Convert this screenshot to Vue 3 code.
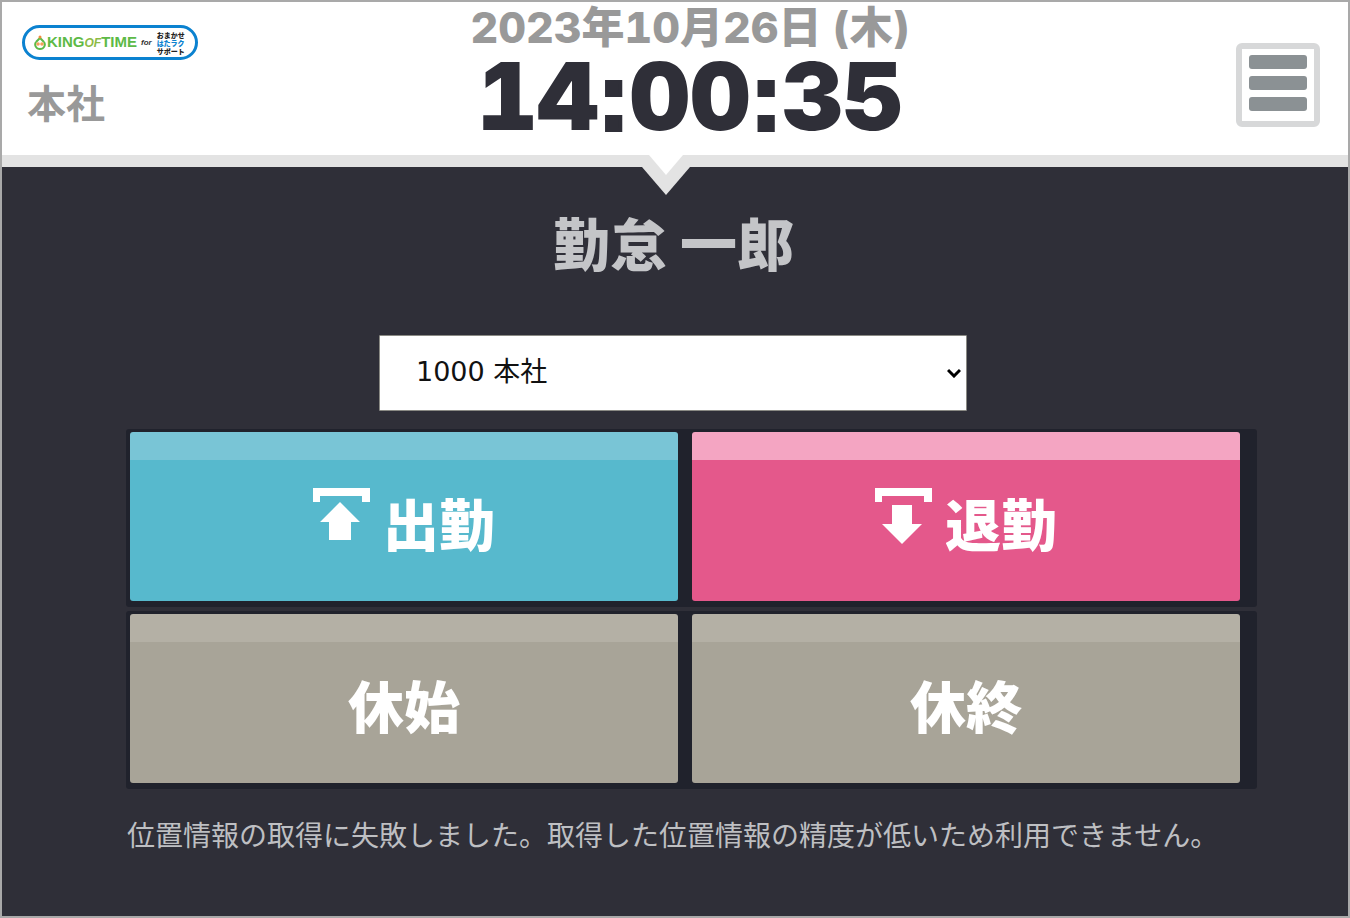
<script setup>
import { ref } from 'vue'

const base = ref('1000')
const bases = [{ code: '1000', name: '本社' }]
const time = ['14', '00', '35']
const rows = [
  [
    { label: '出勤', tone: 'in', icon: 'M20 14L40 34H31V52H9V34H0Z' },
    { label: '退勤', tone: 'out', icon: 'M10 17H30V36H40L20 56L0 36H10Z' },
  ],
  [
    { label: '休始', tone: 'rest' },
    { label: '休終', tone: 'rest' },
  ],
]
</script>

<template>
  <div class="page">
    <header class="top">
      <div class="brand">
        <div class="logo">
          <svg class="crown" viewBox="0 0 12 16" aria-hidden="true">
            <path d="M2 7C0 10 2 14 6 14S12 10 10 7" fill="none" stroke="#5dba47" stroke-width="2" />
            <path d="M2 7L6 3L10 7" fill="none" stroke="#5dba47" stroke-width="2" />
            <circle cx="6" cy="2" r="1.5" fill="#f08a3c" />
            <circle cx="4" cy="9" r="1.8" fill="#f5a05a" />
            <circle cx="8" cy="9" r="1.8" fill="#f5a05a" />
          </svg>
          <span class="king">KING<i>OF</i>TIME</span>
          <span class="for">for</span>
          <span class="plan"><span>おまかせ</span><span class="blue">はたラク</span><span>サポート</span></span>
        </div>
        <div class="office">本社</div>
      </div>
      <div class="clock">
        <div class="date">2023年10月26日 (木)</div>
        <div class="time"><template v-for="(t, i) in time" :key="i"><span v-if="i" class="colon">:</span>{{ t }}</template></div>
      </div>
      <button class="menu" type="button" aria-label="メニュー">
        <span></span><span></span><span></span>
      </button>
      <svg class="pointer" viewBox="0 0 48 41" aria-hidden="true">
        <path d="M0 12L7 0H41L48 12L24 40Z" fill="#e3e3e3" />
        <path d="M7 0H41L24 20Z" fill="#fff" />
      </svg>
    </header>

    <main class="body">
      <h1 class="name">勤怠 一郎</h1>
      <div class="picker">
        <select v-model="base" aria-label="所属">
          <option v-for="b in bases" :key="b.code" :value="b.code">{{ b.code }} {{ b.name }}</option>
        </select>
        <svg viewBox="0 0 14 10" aria-hidden="true">
          <path d="M1 2L7 8L13 2" fill="none" stroke="#000" stroke-width="3" />
        </svg>
      </div>
      <div class="stamps">
        <div v-for="(row, i) in rows" :key="i" class="row">
          <button v-for="b in row" :key="b.label" type="button" class="stamp" :class="b.tone">
            <svg v-if="b.icon" viewBox="0 0 57 57" aria-hidden="true">
              <path d="M0 0H57V14H49V8H7V14H0Z" />
              <path :d="b.icon" transform="translate(7 0)" />
            </svg>
            <span>{{ b.label }}</span>
          </button>
        </div>
      </div>
      <p class="message">位置情報の取得に失敗しました。取得した位置情報の精度が低いため利用できません。</p>
    </main>
  </div>
</template>

<style>
body {
  background: #2f2f38;
}
</style>

<style scoped>
.page {
  box-sizing: border-box;
  min-height: 100vh;
  border: 2px solid #a9a9a9;
  background: #2f2f38;
  font-family: "Liberation Sans", "Noto Sans CJK JP", sans-serif;
}
.top {
  position: relative;
  display: grid;
  grid-template-columns: 1fr auto 1fr;
  height: 153px;
  padding: 0 28px 0 20px;
  background: #fff;
  border-bottom: 12px solid #e3e3e3;
}
.brand {
  padding-top: 23px;
}
.logo {
  box-sizing: border-box;
  display: flex;
  align-items: center;
  width: 176px;
  height: 35px;
  padding: 0 9px;
  border: 3px solid #0b82d0;
  border-radius: 18px;
  white-space: nowrap;
}
.crown {
  width: 12px;
  height: 16px;
}
.king {
  margin-left: 1px;
  color: #5dba47;
  font: 800 15px/18px "Liberation Sans", sans-serif;
}
.king i {
  color: #8dbb45;
  font-size: 12px;
}
.for {
  margin: 0 5px 0 4px;
  color: #333;
  font: italic 700 8px/12px "Liberation Sans", sans-serif;
}
.plan {
  display: flex;
  flex-direction: column;
  color: #222;
  font: 900 7px/8px "Noto Sans CJK JP", sans-serif;
}
.blue {
  color: #0b82d0;
}
.office {
  margin: 13px 0 0 5px;
  color: #999;
  font: 700 39px/56px "Noto Sans CJK JP", sans-serif;
}
.clock {
  padding-left: 38px;
  text-align: center;
  white-space: nowrap;
}
.date {
  color: #999;
  font: 800 43px/50px Inter, "Noto Sans CJK JP", sans-serif;
  font-variant-numeric: tabular-nums;
}
.time {
  color: #2f2f38;
  font: 900 94px/88px Inter, sans-serif;
  font-variant-numeric: tabular-nums;
}
.colon {
  font-family: "Liberation Sans", sans-serif;
  -webkit-text-stroke: 4px #2f2f38;
}
.menu {
  box-sizing: border-box;
  display: flex;
  flex-direction: column;
  justify-self: end;
  gap: 7px;
  width: 84px;
  height: 84px;
  margin-top: 41px;
  padding: 6px 8px;
  border: 6px solid #d7d8d9;
  border-radius: 6px;
  background: #fff;
}
.menu span {
  width: 58px;
  height: 14px;
  border-radius: 3px;
  background: #8b9194;
  align-self: center;
}
.pointer {
  position: absolute;
  top: 153px;
  left: calc(50% - 33px);
  width: 48px;
  height: 41px;
}
.body {
  display: flex;
  flex-direction: column;
  padding: 36px 91px 40px 124px;
}
.name {
  margin: 0 36px 0 0;
  color: #c4c5c8;
  font: 900 57px/76px "Noto Sans CJK JP", sans-serif;
  text-align: center;
}
.picker {
  position: relative;
  width: 52%;
  margin: 56px 0 0 253px;
}
.picker select {
  box-sizing: border-box;
  display: block;
  width: 100%;
  height: 76px;
  padding: 0 36px 4px;
  border: 1px solid #8a8a84;
  border-radius: 1px;
  appearance: none;
  background: #fff;
  color: #111;
  font: 27px "DejaVu Sans", "Noto Sans CJK JP", sans-serif;
}
.picker svg {
  position: absolute;
  top: 33px;
  right: 6px;
  width: 14px;
  height: 10px;
  pointer-events: none;
}
.stamps {
  display: flex;
  flex-direction: column;
  gap: 4px;
  margin-top: 18px;
}
.row {
  display: grid;
  grid-template-columns: 1fr 1fr;
  gap: 14px;
  padding: 3px 17px 6px 4px;
  border-radius: 3px;
  background: #20222c;
}
.stamp {
  display: flex;
  align-items: center;
  justify-content: center;
  gap: 13px;
  height: 169px;
  padding: 11px 0 0;
  border: 0;
  border-radius: 3px;
  color: #fff;
  font: 900 56px/80px "Noto Sans CJK JP", sans-serif;
}
.stamp svg {
  width: 57px;
  height: 57px;
  margin-bottom: 12px;
  fill: #fff;
}
.in {
  background: linear-gradient(#79c5d6 28px, #57b9cd 28px);
}
.out {
  background: linear-gradient(#f4a5c2 28px, #e4588b 28px);
}
.rest {
  background: linear-gradient(#b4b0a5 28px, #a8a498 28px);
}
.message {
  margin: 25px 0 0 1px;
  color: #bebfc2;
  font: 28px/40px "Noto Sans CJK JP", sans-serif;
}
</style>
